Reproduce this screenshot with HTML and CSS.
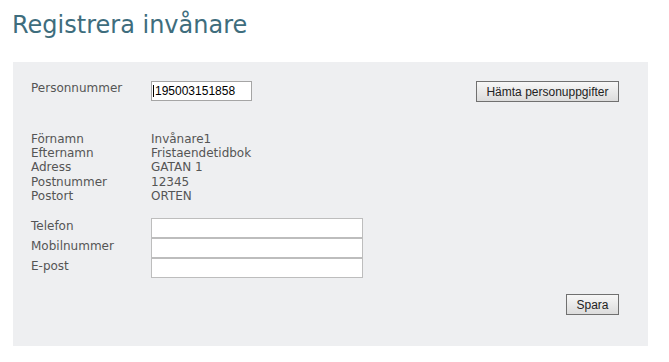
FILE: index.html
```html
<!DOCTYPE html>
<html lang="sv">
<head>
  <meta charset="UTF-8" />
  <title>Registrera invånare</title>
  <link rel="stylesheet" href="styles.css">
</head>
<body>
  <h1 class="page-title">Registrera invånare</h1>

  <div class="panel">
    <div class="lookup">
      <label class="field-label" for="pnr">Personnummer</label>
      <span class="pnr-wrap"><input type="text" id="pnr" class="pnr" value="195003151858" /></span>
      <button class="btn lookup-btn">Hämta personuppgifter</button>
    </div>

    <dl class="info">
      <dt>Förnamn</dt><dd>Invånare1</dd>
      <dt>Efternamn</dt><dd>Fristaendetidbok</dd>
      <dt>Adress</dt><dd>GATAN 1</dd>
      <dt>Postnummer</dt><dd>12345</dd>
      <dt>Postort</dt><dd>ORTEN</dd>
    </dl>

    <div class="contact">
      <label class="field-label" for="phone">Telefon</label>
      <input type="text" id="phone" class="text-input" />
      <label class="field-label" for="mobile">Mobilnummer</label>
      <input type="text" id="mobile" class="text-input" />
      <label class="field-label" for="email">E-post</label>
      <input type="text" id="email" class="text-input" />
    </div>

    <div class="actions">
      <button class="btn save-btn">Spara</button>
    </div>
  </div>
</body>
</html>
```

FILE: styles.css
```css
* {
  margin: 0;
  padding: 0;
  box-sizing: border-box;
}
body {
  font-family: 'DejaVu Sans', Verdana, sans-serif;
  font-size: 12px;
  color: #555;
  background: #fff;
  padding: 0 21px 0 13px;
}
.page-title {
  font-size: 24px;
  font-weight: normal;
  color: #3e6d7d;
  line-height: 28px;
  margin: 11px 0 23px -1px;
}
.panel {
  background: #eeeff1;
  padding: 19px 29px 31px 18px;
}
.lookup {
  display: flex;
  align-items: flex-start;
}
.field-label {
  display: block;
  width: 120px;
  line-height: 14px;
}
.pnr-wrap {
  position: relative;
  display: block;
}
.pnr-wrap::before {
  content: '';
  position: absolute;
  left: 2px;
  top: 4px;
  width: 1px;
  height: 12px;
  background: #000;
}
.pnr {
  display: block;
  width: 101px;
  height: 20px;
  border: 1px solid #a5a5a5;
  background: #fff;
  padding: 0 2px 0 3px;
  font-family: 'Liberation Sans', Arial, sans-serif;
  font-size: 12px;
  color: #000;
  outline: none;
}
.btn {
  height: 21px;
  border: 1px solid #707070;
  background: linear-gradient(#f7f7f7, #dcdcdc);
  font-family: 'Liberation Sans', Arial, sans-serif;
  font-size: 12px;
  color: #222;
  cursor: pointer;
}
.lookup-btn {
  margin-left: auto;
  width: 143px;
}
.info {
  display: grid;
  grid-template-columns: 120px 1fr;
  line-height: 14.2px;
  margin-top: 30px;
}
.contact {
  display: grid;
  grid-template-columns: 120px 212px;
  grid-auto-rows: 20px;
  margin-top: 15px;
}
.contact .field-label {
  line-height: 16px;
}
.text-input {
  display: block;
  width: 212px;
  height: 20px;
  border: 1px solid #bdbdbd;
  background: #fff;
  outline: none;
}
.actions {
  display: flex;
  justify-content: flex-end;
  margin-top: 16px;
}
.save-btn {
  width: 53px;
}
```
